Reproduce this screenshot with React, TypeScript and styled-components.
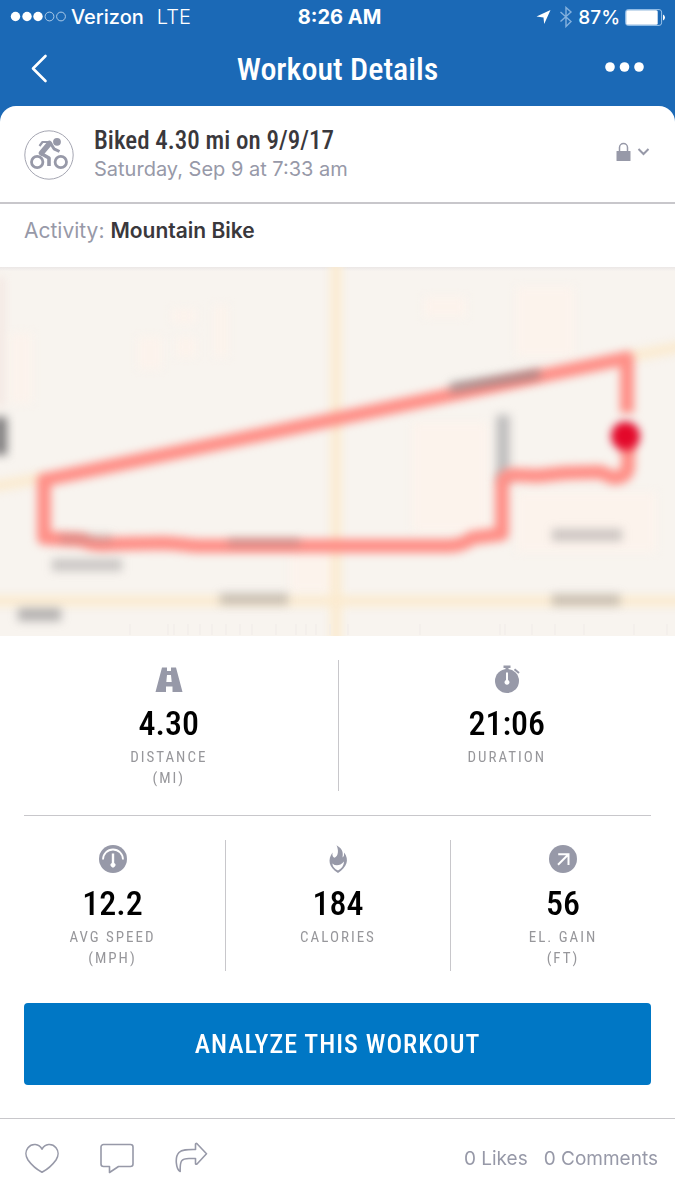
import React from "react";
import styled, { createGlobalStyle, css } from "styled-components";

const narrow = `"Roboto Condensed", "Liberation Sans Narrow", Roboto, sans-serif`;
const sans = `Inter, "Liberation Sans", sans-serif`;
const gray = "#9799a8";

const GlobalStyle = createGlobalStyle`
  *, *::before, *::after { box-sizing: border-box; }
  body { margin: 0; background: #fff; font-family: ${sans}; color: #3a383c; }
  button { appearance: none; border: 0; margin: 0; padding: 0; background: none; font: inherit; color: inherit; cursor: pointer; }
  h1, h2, p, dl, dd { margin: 0; }
  svg { display: block; flex: none; }
`;

const Screen = styled.div`
  min-height: 100vh;
  display: flex;
  flex-direction: column;
  background: #1b69b6;
`;

const StatusBar = styled.div`
  display: grid;
  grid-template-columns: 1fr auto 1fr;
  align-items: center;
  height: 34px;
  padding: 0 10px;
  color: #fff;
  font-size: 20px;
  font-weight: 500;
`;

const StatusGroup = styled.div<{ $end?: boolean }>`
  display: flex;
  align-items: center;
  gap: 5px;
  justify-content: ${(p) => (p.$end ? "flex-end" : "flex-start")};
`;

const Network = styled.span`
  margin-left: 8px;
  font-weight: 300;
`;

const Clock = styled.time`
  padding-left: 4px;
  font-weight: 700;
`;

const BatteryLevel = styled.span`
  font-size: 19px;
`;

const NavBar = styled.header`
  display: grid;
  grid-template-columns: 1fr auto 1fr;
  align-items: center;
  height: 72px;
  padding: 0 30px 2px;
  color: #fff;
`;

const NavTitle = styled.h1`
  font-family: ${narrow};
  font-size: 32px;
  line-height: 40px;
  font-weight: 500;
`;

const NavButton = styled.button<{ $end?: boolean }>`
  justify-self: ${(p) => (p.$end ? "end" : "start")};
`;

const Sheet = styled.main`
  flex: 1;
  display: flex;
  flex-direction: column;
  background: #fff;
  border-radius: 16px 16px 0 0;
`;

const Summary = styled.section`
  display: flex;
  align-items: center;
  gap: 20px;
  height: 98px;
  padding: 2px 25px 0 24px;
  border-bottom: 2px solid #c8c7cb;
`;

const SummaryText = styled.div`
  flex: 1;
`;

const SummaryTitle = styled.h2`
  font-family: ${narrow};
  font-size: 25px;
  line-height: 28px;
  font-weight: 500;
`;

const SummaryDate = styled.p`
  font-size: 20px;
  line-height: 28px;
  color: ${gray};
`;

const PrivacyButton = styled.button`
  display: flex;
  align-items: center;
  gap: 6px;
  padding-bottom: 6px;
`;

const Activity = styled.p`
  padding: 13px 24px 22px;
  font-size: 21px;
  line-height: 28px;
  color: ${gray};

  strong {
    font-weight: 600;
    color: #3a383c;
  }
`;

const RouteMap = styled.svg`
  width: 100%;
  height: auto;
  aspect-ratio: 675 / 369;
`;

const StatRow = styled.dl<{ $columns: number }>`
  display: grid;
  grid-template-columns: repeat(${(p) => p.$columns}, 1fr);
  padding: 24px 0;
`;

const StatCell = styled.div`
  display: flex;
  flex-direction: column;
  align-items: center;
  min-height: 131px;
  padding-top: 5px;

  & + & {
    border-left: 1px solid #c8c7cb;
  }
`;

const StatValue = styled.dd`
  order: 1;
  margin-top: 12px;
  font-family: ${narrow};
  font-size: 34px;
  line-height: 36px;
  font-weight: 500;
  color: #000;
`;

const StatLabel = styled.dt`
  order: 2;
  margin-top: 6px;
  font-family: ${narrow};
  font-size: 15px;
  line-height: 21px;
  letter-spacing: 2px;
  text-align: center;
  text-transform: uppercase;
  color: #97979b;

  span {
    display: block;
  }
`;

const Divider = styled.hr`
  width: auto;
  height: 1px;
  margin: 0 24px;
  border: 0;
  background: #c8c7cb;
`;

const AnalyzeButton = styled.button`
  height: 82px;
  margin: 8px 24px 33px;
  border-radius: 4px;
  background: #0077c5;
  color: #fff;
  font-family: ${narrow};
  font-size: 26px;
  font-weight: 500;
  letter-spacing: 1px;
  text-transform: uppercase;
`;

const Footer = styled.footer`
  display: flex;
  align-items: center;
  gap: 41px;
  height: 82px;
  margin-top: auto;
  padding: 0 17px 3px 25px;
  border-top: 1px solid #c8c7cb;
`;

const Counts = styled.div`
  display: flex;
  gap: 16px;
  margin-left: auto;
  font-size: 19px;
  color: ${gray};
`;

const CountLink = styled.a`
  color: inherit;
  text-decoration: none;
`;

const outline = css`
  fill: none;
  stroke: ${gray};
  stroke-width: 1.6;
  stroke-linejoin: round;
`;

const OutlineIcon = styled.svg`
  ${outline}
`;

function SignalIcon() {
  return (
    <svg width="56" height="12" viewBox="0 0 56 12">
      {[5.5, 17, 28].map((x) => <circle key={x} cx={x} cy="5.500" r="4.700" fill="#fff" />)}
      {[39.5, 51].map((x) => <circle key={x} cx={x} cy="5.500" r="4.400" fill="none" stroke="#cfe2f4" strokeWidth="0.8" />)}
    </svg>
  );
}

function LocationIcon() {
  return (
    <svg width="18" height="16" viewBox="0 0 18 16">
      <path d="M14.500 1 8.200 15 7.500 8.600 0.500 7.500Z" fill="#fff" />
    </svg>
  );
}

function BluetoothIcon() {
  return (
    <svg width="14" height="22" viewBox="0 0 14 22">
      <path d="M1.500 6 12 15.500 7 20.500V1.500L12 6 1.500 15.500" fill="none" stroke="#84b1de" strokeWidth="1.400" />
    </svg>
  );
}

function BatteryIcon() {
  return (
    <svg width="40" height="17" viewBox="0 0 40 17">
      <rect x="0.600" y="0.600" width="36" height="15.800" rx="2.500" fill="none" stroke="#9cc4ea" strokeWidth="1" />
      <rect x="1.200" y="1.200" width="31.500" height="14.600" rx="1.500" fill="#fff" />
      <path d="M38 5.500q2 1 2 3t-2 3Z" fill="#fff" />
    </svg>
  );
}

function BikeBadge() {
  return (
    <svg width="50" height="50" viewBox="0 0 50 50">
      <circle cx="25" cy="25" r="24.200" fill="none" stroke="#a5a6b2" strokeWidth="1" />
      <g fill="none" stroke={gray}>
        <circle cx="13.200" cy="32" r="5.700" strokeWidth="2.800" />
        <circle cx="36.800" cy="32" r="5.700" strokeWidth="2.800" />
        <path d="M17 23.500 25 28V36" strokeWidth="3.600" strokeLinejoin="round" />
        <path d="M17.500 23 25.500 13.500" strokeWidth="5.500" strokeLinecap="round" />
        <path d="M15.500 16 18.500 12H25" strokeWidth="2.200" strokeLinejoin="round" />
        <path d="M27 14 30 18.800 35.500 21.500" strokeWidth="3" strokeLinejoin="round" />
      </g>
      <circle cx="33" cy="11.800" r="3.900" fill={gray} />
    </svg>
  );
}

function LockIcon() {
  return (
    <svg width="15" height="20" viewBox="0 0 15 20">
      <path d="M3.500 10V5.500a4 4 0 0 1 8 0V10" fill="none" stroke={gray} strokeWidth="1.500" />
      <rect x="0.500" y="9" width="14" height="10" rx="0.500" fill={gray} />
    </svg>
  );
}

function RoadIcon() {
  return (
    <svg width="28" height="28" viewBox="0 0 28 28">
      <path fillRule="evenodd" fill={gray} d="M7 2.500H12V6H16V2.500H21L27.500 27H17.500V21.500H11V27H.5ZM12 10 11.300 17H16.700L16 10Z" />
    </svg>
  );
}

function StopwatchIcon() {
  return (
    <svg width="28" height="28" viewBox="0 0 28 28">
      <circle cx="14" cy="16" r="12" fill={gray} />
      <path d="M10.500.5H17.500V3H15.500V5H12.500V3H10.500Z" fill={gray} />
      <path d="M21.500 4.200 26 8" stroke={gray} strokeWidth="2" />
      <path d="M13 7.500h2V15a2.500 2.500 0 1 1-2 0Z" fill="#fff" />
    </svg>
  );
}

function SpeedIcon() {
  return (
    <svg width="28" height="28" viewBox="0 0 28 28">
      <circle cx="14" cy="14" r="14" fill={gray} />
      <path d="M4 14.500a10 10 0 0 1 20 0" fill="none" stroke="#fff" strokeWidth="1.800" />
      <path d="M12.800 8.500h2.400V18a2.400 2.400 0 1 1-2.400 0Z" fill="#fff" />
    </svg>
  );
}

function FlameIcon() {
  return (
    <svg width="28" height="28" viewBox="0 0 28 28">
      <path d="M12.500.3C19 4 19.200 8 18.500 12.500Q20.500 11 20.200 7.500C25.500 15 23 22 14 28 4.500 22 3.500 14.500 8.500 7.500 8 11 9 12.500 10.700 12.700 14.500 11 14.800 5 12.500.3Z" fill={gray} />
      <path d="M8.300 18.500Q14 23 20 16.500 20 22 14 25.500 8.800 23 8.300 18.500Z" fill="#fff" />
    </svg>
  );
}

function GainIcon() {
  return (
    <svg width="28" height="28" viewBox="0 0 28 28">
      <circle cx="14" cy="14" r="14" fill={gray} />
      <path d="M9.200 9.200H19.500V20M19.500 9.200 9 19.700" fill="none" stroke="#fff" strokeWidth="2" />
    </svg>
  );
}

function WorkoutMap() {
  return (
    <RouteMap viewBox="0 0 675 369" role="img" aria-label="Route map">
      <defs>
        <filter id="soft" filterUnits="userSpaceOnUse" x="-40" y="-40" width="760" height="460" colorInterpolationFilters="sRGB">
          <feGaussianBlur stdDeviation="5" />
        </filter>
        <filter id="line" filterUnits="userSpaceOnUse" x="-40" y="-40" width="760" height="460" colorInterpolationFilters="sRGB">
          <feGaussianBlur stdDeviation="4" />
        </filter>
        <linearGradient id="shade" x1="0" y1="0" x2="0" y2="1">
          <stop offset="0" stopColor="#ebe7e6" />
          <stop offset="1" stopColor="#f7f3ef" />
        </linearGradient>
      </defs>
      <rect width="675" height="369" fill="#f8f4ef" />
      <rect width="675" height="4" fill="url(#shade)" />
      <g filter="url(#soft)">
        <g fill="#fcf3ec">
          <rect x="516" y="20" width="58" height="70" />
          <rect x="424" y="30" width="42" height="20" />
          <rect x="172" y="42" width="24" height="14" />
          <rect x="138" y="70" width="24" height="32" />
          <rect x="176" y="70" width="20" height="20" />
          <rect x="214" y="38" width="14" height="52" />
          <rect x="10" y="66" width="22" height="70" />
          <rect x="412" y="155" width="76" height="110" />
          <rect x="516" y="225" width="140" height="60" />
          <rect x="290" y="285" width="40" height="40" />
        </g>
        <g fill="none" stroke="#fbeace" strokeWidth="10">
          <path d="M336 -20V389" />
          <path d="M-20 334H695" />
          <path d="M-10 220 44 211M628 90 690 78" />
        </g>
        <path d="M503 148V215" stroke="#bdbcbc" strokeWidth="13" />
        <path d="M0 150V188" stroke="#807e7f" strokeWidth="14" />
        <path d="M0 10V140" stroke="#f2e2dd" strokeWidth="6" />
      </g>
      <g filter="url(#line)" fill="none" stroke="#fe8f87" strokeWidth="14" strokeLinejoin="round">
        <path d="M627 146V91L44 213V271L82 273Q92 279 112 277L165 276Q180 277 196 279H450Q464 278 472 271L502 267V218Q502 208 514 208L538 209 565 206 600 205 614 211Q627 210 628 200V175" />
      </g>
      <g filter="url(#soft)" fill="#7d7b7e">
        <rect x="52" y="292" width="70" height="12" opacity="0.380" />
        <rect x="220" y="326" width="68" height="12" opacity="0.380" />
        <rect x="552" y="262" width="70" height="12" opacity="0.380" />
        <rect x="552" y="327" width="68" height="12" opacity="0.380" />
        <rect x="18" y="341" width="43" height="13" opacity="0.550" />
        <rect x="60" y="267" width="52" height="9" opacity="0.250" />
        <rect x="228" y="271" width="72" height="8" opacity="0.350" />
        <path d="M450 116 540 102V111L450 126Z" opacity="0.650" />
      </g>
      <circle cx="625.500" cy="169" r="14.500" fill="#e3082a" filter="url(#line)" />
      <g stroke="#f0ebe8" strokeWidth="1">
        {[130, 168, 174, 188, 200, 212, 226, 240, 252, 276, 296, 306, 316, 330, 348, 420, 500, 505, 532, 555, 584, 634, 667].map((x) => (
          <path key={x} d={`M${x} 357v11`} />
        ))}
      </g>
    </RouteMap>
  );
}

type Stat = { value: string; label: string; unit?: string; icon: React.ReactNode };

const primary: Stat[] = [
  { value: "4.30", label: "Distance", unit: "(mi)", icon: <RoadIcon /> },
  { value: "21:06", label: "Duration", icon: <StopwatchIcon /> },
];

const secondary: Stat[] = [
  { value: "12.2", label: "Avg speed", unit: "(mph)", icon: <SpeedIcon /> },
  { value: "184", label: "Calories", icon: <FlameIcon /> },
  { value: "56", label: "El. gain", unit: "(ft)", icon: <GainIcon /> },
];

function Stats({ items }: { items: Stat[] }) {
  return (
    <StatRow $columns={items.length}>
      {items.map((s) => (
        <StatCell key={s.label}>
          {s.icon}
          <StatLabel>
            {s.label}
            {s.unit && <span>{s.unit}</span>}
          </StatLabel>
          <StatValue>{s.value}</StatValue>
        </StatCell>
      ))}
    </StatRow>
  );
}

export default function App() {
  return (
    <Screen>
      <GlobalStyle />
      <StatusBar>
        <StatusGroup>
          <SignalIcon />
          <span>Verizon</span>
          <Network>LTE</Network>
        </StatusGroup>
        <Clock>8:26 AM</Clock>
        <StatusGroup $end>
          <LocationIcon />
          <BluetoothIcon />
          <BatteryLevel>87%</BatteryLevel>
          <BatteryIcon />
        </StatusGroup>
      </StatusBar>
      <NavBar>
        <NavButton aria-label="Back">
          <svg width="18" height="30" viewBox="0 0 18 30">
            <path d="M15.500 2 3 14.500 15.500 27" fill="none" stroke="#fff" strokeWidth="2.600" strokeLinecap="round" strokeLinejoin="round" />
          </svg>
        </NavButton>
        <NavTitle>Workout Details</NavTitle>
        <NavButton $end aria-label="More options">
          <svg width="40" height="14" viewBox="0 0 40 14">
            {[5, 19.5, 34].map((x) => <circle key={x} cx={x} cy="5" r="4.800" fill="#fff" />)}
          </svg>
        </NavButton>
      </NavBar>
      <Sheet>
        <Summary>
          <BikeBadge />
          <SummaryText>
            <SummaryTitle>Biked 4.30 mi on 9/9/17</SummaryTitle>
            <SummaryDate>Saturday, Sep 9 at 7:33 am</SummaryDate>
          </SummaryText>
          <PrivacyButton aria-label="Privacy">
            <LockIcon />
            <svg width="13" height="10" viewBox="0 0 13 10">
              <path d="M1.500 2 6.500 7 11.500 2" fill="none" stroke={gray} strokeWidth="2" />
            </svg>
          </PrivacyButton>
        </Summary>
        <Activity>
          Activity: <strong>Mountain Bike</strong>
        </Activity>
        <WorkoutMap />
        <Stats items={primary} />
        <Divider />
        <Stats items={secondary} />
        <AnalyzeButton>Analyze this workout</AnalyzeButton>
        <Footer>
          <button aria-label="Like">
            <OutlineIcon width="34" height="32" viewBox="0 0 34 32">
              <path d="M17 30.300C10 26.500 5.500 21.500 3 18 .3 14 .3 9 3 5.700 7 1 14 1.500 17 7.200 20 1.500 27 1 31 5.700 33.700 9 33.700 14 31 18 28.500 21.500 24 26.500 17 30.300Z" />
            </OutlineIcon>
          </button>
          <button aria-label="Comment">
            <OutlineIcon width="34" height="32" viewBox="0 0 34 32">
              <path d="M3.500 2.500H30.500a2.500 2.500 0 0 1 2.500 2.500V22a2.500 2.500 0 0 1-2.500 2.500H18.500L9.500 30.500V24.500H3.500a2.500 2.500 0 0 1-2.500-2.500V5a2.500 2.500 0 0 1 2.500-2.500Z" />
            </OutlineIcon>
          </button>
          <button aria-label="Share">
            <OutlineIcon width="34" height="32" viewBox="0 0 34 32">
              <path d="M20.500 2Q21 1 22 1.700L31.500 11.800 22 22Q20.500 22.500 20.500 21.500V16.500H14C6.500 16.500 4.800 18.500 5.200 29.500 1 27.500-.5 15 4 10.500 7 7.500 12 7.300 20.500 7.500Z" />
            </OutlineIcon>
          </button>
          <Counts>
            <CountLink href="#likes">0 Likes</CountLink>
            <CountLink href="#comments">0 Comments</CountLink>
          </Counts>
        </Footer>
      </Sheet>
    </Screen>
  );
}
